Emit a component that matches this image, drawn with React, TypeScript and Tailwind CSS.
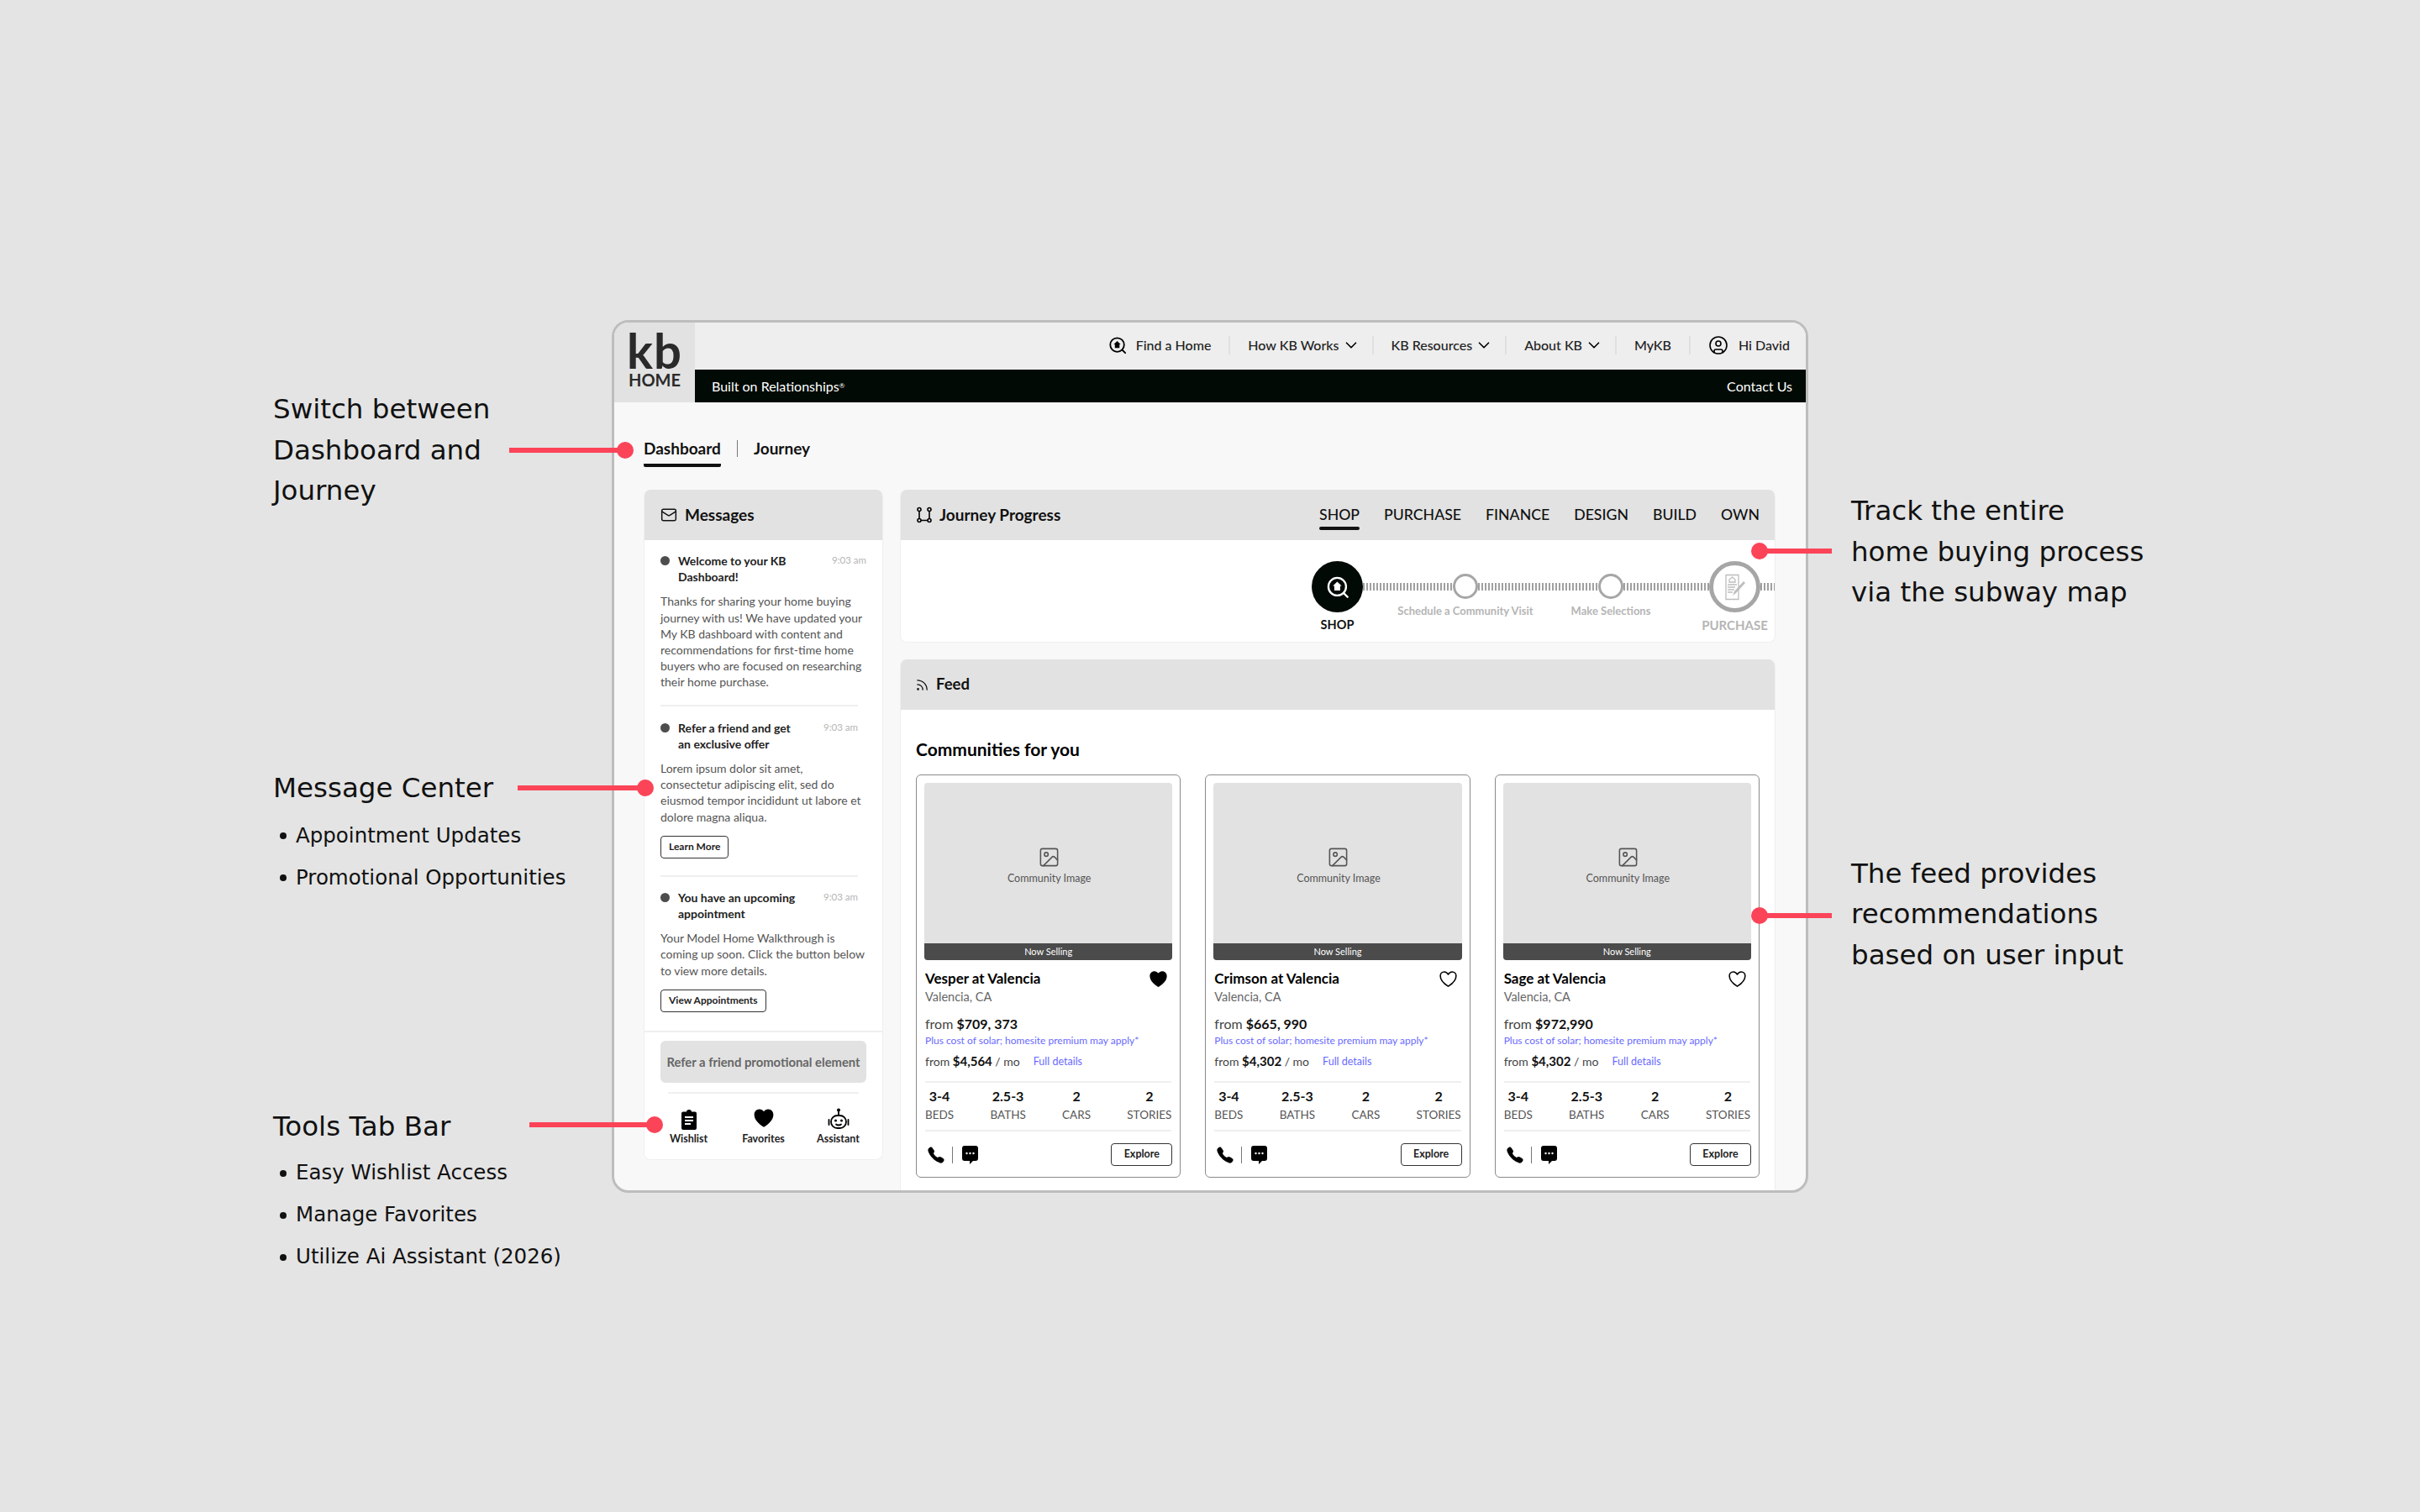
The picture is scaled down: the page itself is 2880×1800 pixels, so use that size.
import { ChevronDown, CircleUser, Image, Mail, Rss } from 'lucide-react'
import { IoCall, IoHeart, IoHeartOutline } from 'react-icons/io5'

const communities = [
  { name: 'Vesper at Valencia', price: '$709, 373', monthly: '$4,564', liked: true },
  { name: 'Crimson at Valencia', price: '$665, 990', monthly: '$4,302', liked: false },
  { name: 'Sage at Valencia', price: '$972,990', monthly: '$4,302', liked: false },
]

const stats = [
  { value: '3-4', label: 'BEDS' },
  { value: '2.5-3', label: 'BATHS' },
  { value: '2', label: 'CARS' },
  { value: '2', label: 'STORIES' },
]

function FindHomeIcon({ className }: { className: string }) {
  return (
    <svg viewBox="0 0 24 24" fill="none" stroke="currentColor" strokeWidth="2" className={className}>
      <circle cx="11.5" cy="11.5" r="9" />
      <path d="M18 18l4 4" strokeLinecap="round" />
      <path d="M11.5 6.5l4.500 4.300h-1.500V15.500h-6V10.800H7z" fill="currentColor" stroke="none" />
    </svg>
  )
}

function JourneyIcon() {
  return (
    <svg viewBox="0 0 20 20" fill="none" stroke="currentColor" strokeWidth="1.6" className="w-[20px] h-[20px] text-black">
      <circle cx="4" cy="3.5" r="2" />
      <circle cx="16" cy="3.5" r="2" />
      <circle cx="4" cy="16.5" r="2" />
      <circle cx="16" cy="16.5" r="2" />
      <path d="M4 5.500v9M16 5.500v9M6 16.500h8" />
    </svg>
  )
}

function ChatIcon() {
  return (
    <svg viewBox="0 0 21 24" className="w-[21px] h-[24px]">
      <path d="M4 1h13a3 3 0 0 1 3 3v12a3 3 0 0 1-3 3h-3l-4 4v-4H4a3 3 0 0 1-3-3V4a3 3 0 0 1 3-3z" fill="#000" />
      <circle cx="6.500" cy="10" r="1.200" fill="#fff" />
      <circle cx="10.500" cy="10" r="1.200" fill="#fff" />
      <circle cx="14.500" cy="10" r="1.200" fill="#fff" />
    </svg>
  )
}

function WishlistIcon() {
  return (
    <svg viewBox="0 0 20 24" className="w-[20px] h-[24px]">
      <path d="M7 2.500a3 2.500 0 0 1 6 0h4a2 2 0 0 1 2 2V22a2 2 0 0 1-2 2H3a2 2 0 0 1-2-2V4.500a2 2 0 0 1 2-2z" fill="#000" />
      <path d="M5 9h10M5 13h10M5 17h7" stroke="#fff" strokeWidth="1.8" />
    </svg>
  )
}

function AssistantIcon() {
  return (
    <svg viewBox="0 0 26 26" fill="none" stroke="#000" strokeWidth="1.8" className="w-[26px] h-[26px]">
      <circle cx="13" cy="2.500" r="2" fill="#000" stroke="none" />
      <path d="M13 4v5" />
      <rect x="4" y="9" width="18" height="15" rx="7.500" />
      <path d="M1.500 14v6M24.500 14v6" strokeLinecap="round" />
      <circle cx="9.500" cy="15" r="1.500" fill="#000" stroke="none" />
      <circle cx="16.500" cy="15" r="1.500" fill="#000" stroke="none" />
      <path d="M10 19.500c1.500 1.300 4.500 1.300 6 0" strokeLinecap="round" />
    </svg>
  )
}

function ContractIcon() {
  return (
    <svg viewBox="0 0 28 32" fill="none" stroke="#bdbdbd" strokeWidth="1.300" className="w-[28px] h-[32px]">
      <path d="M3 1.500h15v29H3z" />
      <path d="M10.500 4l3.500 3v3H7V7z" />
      <path d="M5 13h11M5 16h9M5 19h8M5 22h6" />
      <path d="M11 26l2-5 11-12 2 2-11 12z" fill="#bdbdbd" stroke="none" />
    </svg>
  )
}

function Hatched({ className }: { className: string }) {
  return (
    <div className={`h-[9px] mt-[26px] bg-[repeating-linear-gradient(90deg,#a0a0a0_0,#a0a0a0_2px,#ffffff_2px,#ffffff_4px)] ${className}`} />
  )
}

function NavItem({ label, menu }: { label: string; menu?: boolean }) {
  return (
    <div className={`flex items-center pl-[21px] border-r-2 border-[#e0e0e0] h-[22px] ${menu ? 'pr-[14px]' : 'pr-[21px]'}`}>
      <span>{label}</span>
      {menu && <ChevronDown className="ml-[3px] w-[22px] h-[22px] text-black" strokeWidth={1.800} />}
    </div>
  )
}

function Message({ title, lines, action, className }: { title: string[]; lines: string; action?: string; className: string }) {
  return (
    <div className={className}>
      <div className="flex items-start">
        <span className="mt-[4px] w-[11px] h-[11px] rounded-full bg-[#4d4d4d] mr-[10px] shrink-0" />
        <div className="flex-1 text-[14px] leading-[19.200px] font-bold text-[#222]">
          {title.map((t) => (
            <div key={t}>{t}</div>
          ))}
        </div>
        <span className="text-[11.500px] leading-[17px] text-[#b5b5b5] ml-[8px]">9:03 am</span>
      </div>
      <p className="mt-[10px] text-[14px] leading-[19.200px] text-[#555] whitespace-pre">{lines}</p>
      {action && (
        <button className="block mt-[13px] h-[27px] px-[9px] rounded-[4px] border-[1.500px] border-[#333] bg-white text-[12px] font-bold text-[#222]">
          {action}
        </button>
      )}
    </div>
  )
}

function Tab({ label, icon }: { label: string; icon: React.ReactNode }) {
  return (
    <div className="flex flex-col items-center">
      <div className="h-[30px] flex items-end justify-center">{icon}</div>
      <span className="mt-[3px] text-[12.500px] leading-[16px] font-bold text-[#222]">{label}</span>
    </div>
  )
}

function CommunityCard({ name, price, monthly, liked }: { name: string; price: string; monthly: string; liked: boolean }) {
  return (
    <div className="h-[480px] rounded-[6px] border-[1.500px] border-[#8a8a8a] bg-white px-[9px] pt-[9px]">
      <div className="h-[211px] rounded-[4px] overflow-hidden bg-[#e2e2e2] flex flex-col">
        <div className="flex-1 flex flex-col items-center justify-center pt-[7px] pl-[2px]">
          <Image className="w-[27px] h-[27px] text-[#555]" strokeWidth={1.400} />
          <span className="mt-[3px] text-[12.500px] leading-[18px] text-[#555]">Community Image</span>
        </div>
        <div className="h-[20px] bg-[#4b4b4b] text-white text-[11px] leading-[20px] text-center">Now Selling</div>
      </div>
      <div className="px-[1px]">
        <div className="mt-[10px] flex items-center justify-between h-[24px]">
          <span className="text-[17px] font-bold text-black">{name}</span>
          <span className="mr-[3px]">
            {liked ? <IoHeart className="w-[25px] h-[25px] text-black" /> : <IoHeartOutline className="w-[25px] h-[25px] text-black" />}
          </span>
        </div>
        <div className="text-[14.500px] leading-[20px] text-[#666]">Valencia, CA</div>
        <div className="mt-[11px] text-[16px] leading-[22px] text-[#444]">
          from <span className="font-bold text-[#111]">{price}</span>
        </div>
        <div className="text-[12px] leading-[18px] text-[#6a6aff]">Plus cost of solar; homesite premium may apply*</div>
        <div className="mt-[4px] flex items-center h-[22px] text-[#444] text-[14px]">
          <span>
            from <span className="text-[15px] font-bold text-[#111]">{monthly}</span> / mo
          </span>
          <span className="ml-[16px] pt-[2px] text-[12.500px] text-[#6a6aff]">Full details</span>
        </div>
        <div className="mt-[13px] border-y-2 border-[#efefef] h-[60px] pt-[5px] flex items-start justify-between">
          {stats.map((s) => (
            <div key={s.label} className="flex flex-col items-center">
              <span className="text-[16px] leading-[22px] font-bold text-[#111]">{s.value}</span>
              <span className="text-[13.500px] leading-[22px] text-[#555]">{s.label}</span>
            </div>
          ))}
        </div>
        <div className="mt-[14px] flex items-center">
          <IoCall className="w-[22px] h-[22px] text-black ml-[2px]" />
          <span className="ml-[8px] w-px h-[20px] bg-[#777]" />
          <span className="ml-[10px]">
            <ChatIcon />
          </span>
          <button className="ml-auto -mr-px w-[73px] h-[27px] rounded-[4px] border-[1.500px] border-[#333] bg-white text-[12.500px] font-bold text-[#222]">
            Explore
          </button>
        </div>
      </div>
    </div>
  )
}

function Note({ className, children }: { className: string; children: React.ReactNode }) {
  return <div className={`text-[32.500px] leading-[48.500px] text-[#111] whitespace-nowrap ${className}`}>{children}</div>
}

function Bullets({ items, className }: { items: string[]; className: string }) {
  return (
    <ul className={className}>
      {items.map((i) => (
        <li key={i} className="flex items-center h-[50px] text-[24.500px] text-[#111] whitespace-nowrap">
          <span className="ml-[8px] mr-[11px] w-[8px] h-[8px] rounded-full bg-[#111]" />
          {i}
        </li>
      ))}
    </ul>
  )
}

function Leader({ line, dot }: { line: string; dot: string }) {
  return (
    <>
      <div className={`absolute h-[6px] bg-[#fb4458] ${line}`} />
      <div className={`absolute w-[20px] h-[20px] rounded-full bg-[#fb4458] ${dot}`} />
    </>
  )
}

export default function App() {
  return (
    <div className="relative w-[2880px] h-[1800px] overflow-hidden bg-[#e4e4e4] flex items-start font-['Lato','Open_Sans',sans-serif]">
      {/* Left notes */}
      <div className="w-[728px] shrink-0 pl-[325px] pt-[463px] font-['DejaVu_Sans',sans-serif]">
        <Note className="">
          Switch between
          <br />
          Dashboard and
          <br />
          Journey
        </Note>
        <Note className="mt-[305px]">Message Center</Note>
        <Bullets className="mt-[8px]" items={['Appointment Updates', 'Promotional Opportunities']} />
        <Note className="mt-[247px]">Tools Tab Bar</Note>
        <Bullets className="mt-[6px]" items={['Easy Wishlist Access', 'Manage Favorites', 'Utilize Ai Assistant (2026)']} />
      </div>

      {/* Browser frame */}
      <div className="mt-[381px] w-[1424px] h-[1039px] shrink-0 rounded-[20px] border-[3px] border-[#bdbdbd] bg-[#f8f8f8] overflow-hidden">
        <header className="flex h-[95px]">
          <div className="w-[96px] shrink-0 bg-[#e2e2e2] flex flex-col items-center pt-[9px] text-[#2a2a2a]">
            <span className="text-[58px] leading-[48px] font-bold tracking-[1px]">kb</span>
            <span className="mt-px text-[20px] leading-[20px] font-bold">HOME</span>
          </div>
          <div className="flex-1 flex flex-col">
            <div className="h-[56px] bg-[#eeeeee] flex items-center justify-end text-[16px] text-[#222] font-medium pr-[19px] pb-[3px]">
              <div className="flex items-center gap-[11px] pr-[21px] border-r-2 border-[#e0e0e0] h-[22px]">
                <FindHomeIcon className="w-[22px] h-[22px] text-black" />
                <span>Find a Home</span>
              </div>
              <NavItem label="How KB Works" menu />
              <NavItem label="KB Resources" menu />
              <NavItem label="About KB" menu />
              <NavItem label="MyKB" />
              <div className="flex items-center gap-[12px] pl-[21px]">
                <CircleUser className="w-[24px] h-[24px] text-black" strokeWidth={1.600} />
                <span>Hi David</span>
              </div>
            </div>
            <div className="h-[39px] bg-[#020a05] flex items-center justify-between text-white text-[16px] pl-[20px] pr-[16px]">
              <span>
                Built on Relationships<sup className="text-[8px]">®</sup>
              </span>
              <span>Contact Us</span>
            </div>
          </div>
        </header>

        <div className="pl-[35px] pr-[36px]">
          <nav className="mt-[40px] h-[41px] flex items-start text-[19px] font-bold text-[#111]">
            <div className="border-b-4 border-[#111] rounded-b-[2px] h-[37px] leading-[30px]">Dashboard</div>
            <span className="mx-[19px] mt-[5px] w-px h-[20px] bg-[#777]" />
            <span className="leading-[30px]">Journey</span>
          </nav>

          <div className="mt-[23px] flex items-start gap-[20px]">
            {/* Messages */}
            <aside className="w-[285px] h-[798px] shrink-0 rounded-[8px] overflow-hidden bg-white border border-[#efefef] border-t-0">
              <div className="h-[60px] bg-[#e2e2e2] flex items-center gap-[9px] px-[19px] text-[19px] font-bold text-[#111]">
                <Mail className="w-[20px] h-[20px]" strokeWidth={1.800} />
                Messages
              </div>
              <div className="px-[19px]">
                <Message
                  className="pt-[15px] pb-[17px]"
                  title={['Welcome to your KB', 'Dashboard!']}
                  lines={'Thanks for sharing your home buying\njourney with us! We have updated your\nMy KB dashboard with content and\nrecommendations for first-time home\nbuyers who are focused on researching\ntheir home purchase.'}
                />
                <Message
                  className="border-t-2 border-[#efefef] mr-[10px] pt-[16px] pb-[20px]"
                  title={['Refer a friend and get', 'an exclusive offer']}
                  lines={'Lorem ipsum dolor sit amet,\nconsectetur adipiscing elit, sed do\neiusmod tempor incididunt ut labore et\ndolore magna aliqua.'}
                  action="Learn More"
                />
                <Message
                  className="border-t-2 border-[#efefef] mr-[10px] pt-[15px] pb-[22px]"
                  title={['You have an upcoming', 'appointment']}
                  lines={'Your Model Home Walkthrough is\ncoming up soon. Click the button below\nto view more details.'}
                  action="View Appointments"
                />
              </div>
              <div className="border-t-2 border-[#efefef] px-[19px] pt-[10px]">
                <div className="h-[50px] rounded-[6px] bg-[#e2e2e2] flex items-center justify-center text-[14.800px] font-bold text-[#666]">
                  Refer a friend promotional element
                </div>
                <div className="mt-[11px] mx-[9px] border-t-2 border-[#efefef]" />
              </div>
              <div className="grid grid-cols-3 px-[8px] pt-[13px]">
                <Tab label="Wishlist" icon={<WishlistIcon />} />
                <Tab label="Favorites" icon={<IoHeart className="w-[28px] h-[28px] text-black" />} />
                <Tab label="Assistant" icon={<AssistantIcon />} />
              </div>
            </aside>

            {/* Journey + feed */}
            <main className="flex-1 min-w-0 flex flex-col gap-[20px]">
              <section className="h-[182px] rounded-[8px] overflow-hidden bg-white border border-[#efefef] border-t-0">
                <div className="h-[60px] bg-[#e2e2e2] flex items-center px-[18px]">
                  <JourneyIcon />
                  <span className="ml-[8px] text-[19px] font-bold text-[#111]">Journey Progress</span>
                  <div className="ml-auto flex gap-[29px] text-[17.700px] font-medium text-[#111]">
                    <span className="relative">
                      SHOP
                      <span className="absolute left-0 right-0 -bottom-[5px] h-[4px] rounded-[2px] bg-[#111]" />
                    </span>
                    <span>PURCHASE</span>
                    <span>FINANCE</span>
                    <span>DESIGN</span>
                    <span>BUILD</span>
                    <span>OWN</span>
                  </div>
                </div>
                <div className="flex items-start pl-[489px] pt-[25px]">
                  <div className="w-[61px] shrink-0 flex flex-col items-center">
                    <div className="w-[61px] h-[61px] rounded-full bg-[#020a05] flex items-center justify-center">
                      <FindHomeIcon className="w-[28px] h-[28px] text-white" />
                    </div>
                    <span className="mt-[5px] text-[14.500px] leading-[20px] font-bold text-[#111]">SHOP</span>
                  </div>
                  <Hatched className="w-[107px] shrink-0" />
                  <div className="w-[30px] shrink-0 mt-[15px] flex flex-col items-center">
                    <div className="w-[30px] h-[30px] rounded-full border-[3.500px] border-[#a6a6a6] bg-white" />
                    <span className="mt-[5px] text-[13px] leading-[18px] font-bold text-[#b5b5b5] whitespace-nowrap">Schedule a Community Visit</span>
                  </div>
                  <Hatched className="w-[143px] shrink-0" />
                  <div className="w-[30px] shrink-0 mt-[15px] flex flex-col items-center">
                    <div className="w-[30px] h-[30px] rounded-full border-[3.500px] border-[#a6a6a6] bg-white" />
                    <span className="mt-[5px] text-[13px] leading-[18px] font-bold text-[#b5b5b5] whitespace-nowrap">Make Selections</span>
                  </div>
                  <Hatched className="w-[102px] shrink-0" />
                  <div className="w-[61px] shrink-0 flex flex-col items-center">
                    <div className="w-[61px] h-[61px] rounded-full border-[5px] border-[#a6a6a6] flex items-center justify-center">
                      <ContractIcon />
                    </div>
                    <span className="mt-[5px] text-[15px] leading-[20px] font-bold text-[#b5b5b5]">PURCHASE</span>
                  </div>
                  <Hatched className="flex-1" />
                </div>
              </section>

              <section className="h-[700px] rounded-t-[8px] overflow-hidden bg-white border border-[#efefef] border-t-0">
                <div className="h-[60px] bg-[#e2e2e2] flex items-center gap-[8px] px-[17px] text-[18.500px] font-bold text-[#111]">
                  <Rss className="w-[17px] h-[17px]" strokeWidth={1.800} />
                  Feed
                </div>
                <div className="px-[18px]">
                  <h2 className="mt-[33px] text-[21px] leading-[28px] font-bold text-black">Communities for you</h2>
                  <div className="mt-[16px] grid grid-cols-3 gap-[29px]">
                    {communities.map((c) => (
                      <CommunityCard key={c.name} {...c} />
                    ))}
                  </div>
                </div>
              </section>
            </main>
          </div>
        </div>
      </div>

      {/* Right notes */}
      <div className="flex-1 pl-[51px] pt-[584px] font-['DejaVu_Sans',sans-serif]">
        <Note className="">
          Track the entire
          <br />
          home buying process
          <br />
          via the subway map
        </Note>
        <Note className="mt-[286px]">
          The feed provides
          <br />
          recommendations
          <br />
          based on user input
        </Note>
      </div>

      {/* Callout leaders */}
      <Leader line="left-[606px] top-[533px] w-[139px]" dot="left-[734px] top-[526px]" />
      <Leader line="left-[616px] top-[935px] w-[150px]" dot="left-[758px] top-[928px]" />
      <Leader line="left-[630px] top-[1336px] w-[150px]" dot="left-[769px] top-[1329px]" />
      <Leader line="left-[2094px] top-[653px] w-[86px]" dot="left-[2084px] top-[646px]" />
      <Leader line="left-[2094px] top-[1087px] w-[86px]" dot="left-[2084px] top-[1080px]" />
    </div>
  )
}
